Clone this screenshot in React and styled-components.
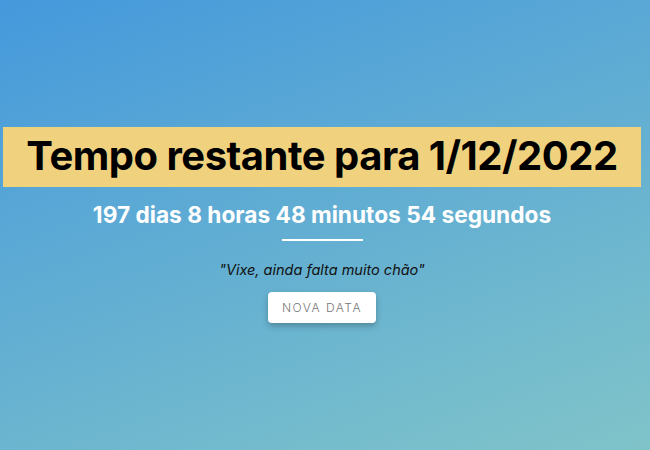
import styled, { createGlobalStyle } from 'styled-components'

const GlobalStyle = createGlobalStyle`
    html, body {
        margin: 0;
        padding: 0;
    }
    body {
        font-family: Inter, "Noto Sans", sans-serif;
    }
`

export default function App() {
    return (
        <Page>
            <GlobalStyle />
            <Banner>Tempo restante para 1/12/2022</Banner>
            <Countdown>197 dias 8 horas 48 minutos 54 segundos</Countdown>
            <Divider />
            <Quote>"Vixe, ainda falta muito chão"</Quote>
            <Button>Nova data</Button>
        </Page>
    );
}

const Page = styled.div`
    min-height: 100vh;
    box-sizing: border-box;
    display: flex;
    flex-direction: column;
    align-items: center;
    justify-content: center;
    padding: 0 6px 0 0;
    background: linear-gradient(160deg, #4599dc, #80c4c9);
`

const Banner = styled.h1`
    align-self: stretch;
    margin: 0 3px 0 3px;
    padding: 5px 0 7px;
    background: #f0d27e;
    color: #000;
    font-size: 40px;
    font-weight: 700;
    line-height: 48px;
    letter-spacing: -0.5px;
    text-align: center;
`

const Countdown = styled.h2`
    margin: 14px 0 0;
    color: #fff;
    font-size: 22.7px;
    font-weight: 700;
    line-height: 27px;
    text-align: center;
`

const Divider = styled.hr`
    width: 81px;
    height: 2px;
    margin: 11px 0 0;
    border: 0;
    background: #fff;
`

const Quote = styled.p`
    margin: 20px 0 0;
    color: #111;
    font-size: 14.5px;
    font-style: italic;
    line-height: 17px;
`

const Button = styled.button`
    margin: 14px 0 0;
    width: 108px;
    height: 31px;
    border: 0;
    border-radius: 4px;
    background: #fff;
    color: #777;
    font-family: Inter, sans-serif;
    font-size: 12px;
    font-weight: 300;
    letter-spacing: 1.5px;
    text-transform: uppercase;
    box-shadow: 0 3px 6px rgba(0, 0, 0, 0.25);
`
